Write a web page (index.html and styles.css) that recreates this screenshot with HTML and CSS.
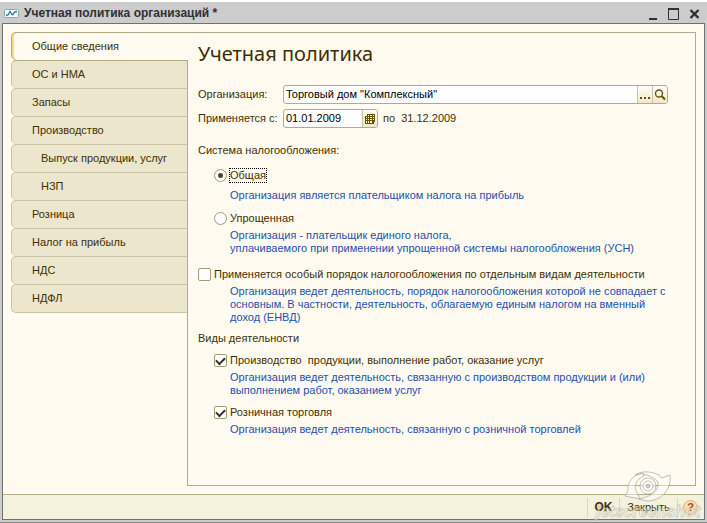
FILE: index.html
```html
<!DOCTYPE html>
<html lang="ru">
<head>
    <meta charset="UTF-8">
    <meta name="viewport" content="width=device-width, initial-scale=1.0">
    <title>Учетная политика организаций</title>
    <link rel="stylesheet" href="styles.css">
</head>
<body>
    <div class="window">
        <header class="titlebar">
            <svg class="app-icon" width="16" height="9" viewBox="0 0 16 9">
                <rect x="0.5" y="0.5" width="14" height="8" rx="1" fill="#f4fbff" stroke="#8aaabb"/>
                <path d="M2 6.5L4 6L6 2.5L8 5.5L9 5.5L10.500 3L13 2.500" fill="none" stroke="#2f6f96" stroke-width="1.300"/>
            </svg>
            <span class="title">Учетная политика организаций *</span>
            <button class="win-btn" aria-label="Свернуть">
                <svg width="12" height="12" viewBox="0 0 12 12"><path d="M2 11h8" stroke="#303030" stroke-width="2"/></svg>
            </button>
            <button class="win-btn" aria-label="Развернуть">
                <svg width="12" height="12" viewBox="0 0 12 12"><path d="M0.500 1v10.500h10V1" fill="none" stroke="#303030"/><path d="M0 1h11" stroke="#303030" stroke-width="2"/></svg>
            </button>
            <button class="win-btn" aria-label="Закрыть окно">
                <svg width="12" height="12" viewBox="0 0 12 12"><path d="M1.500 2l8 8M9.500 2l-8 8" stroke="#303030" stroke-width="2.400"/></svg>
            </button>
        </header>

        <div class="client">
            <main class="content">
                <nav class="tabs">
                    <a href="#" class="tab active">Общие сведения</a>
                    <a href="#" class="tab">ОС и НМА</a>
                    <a href="#" class="tab">Запасы</a>
                    <a href="#" class="tab">Производство</a>
                    <a href="#" class="tab sub">Выпуск продукции, услуг</a>
                    <a href="#" class="tab sub">НЗП</a>
                    <a href="#" class="tab">Розница</a>
                    <a href="#" class="tab">Налог на прибыль</a>
                    <a href="#" class="tab">НДС</a>
                    <a href="#" class="tab">НДФЛ</a>
                </nav>

                <form class="panel">
                    <h1>Учетная политика</h1>

                    <div class="row">
                        <label class="caption" for="org">Организация:</label>
                        <div class="field wide">
                            <input type="text" id="org" value='Торговый дом "Комплексный"'>
                            <button type="button" class="field-btn" aria-label="Выбрать">
                                <svg width="12" height="12" viewBox="0 0 12 12" fill="#6b4e00"><path d="M1 8h2v2H1zM5 8h2v2H5zM9 8h2v2H9z"/></svg>
                            </button>
                            <button type="button" class="field-btn" aria-label="Открыть">
                                <svg width="12" height="12" viewBox="0 0 12 12" fill="none" stroke="#6b4e00"><circle cx="5" cy="4.500" r="3.500" stroke-width="1.300"/><path d="M7.500 7l3.500 3.500" stroke-width="2"/></svg>
                            </button>
                        </div>
                    </div>
                    <div class="row">
                        <label class="caption" for="from">Применяется с:</label>
                        <div class="field date">
                            <input type="text" id="from" value="01.01.2009">
                            <button type="button" class="field-btn" aria-label="Календарь">
                                <svg width="12" height="12" viewBox="0 0 12 12"><path d="M3 1h8v8h-1v2H1V3h2z" fill="#6b5200"/><path d="M4 2h1v1H4zM6 2h2v1H6zM9 2h1v1H9zM2 4h1v1H2zM4 4h1v1H4zM6 4h2v1H6zM9 4h1v1H9zM2 6h1v1H2zM4 6h1v1H4zM6 6h2v1H6zM9 6h1v1H9zM2 8h1v2H2zM4 8h1v2H4zM6 8h2v2H6z" fill="#fbf5d8"/></svg>
                            </button>
                        </div>
                        <span class="until">по&nbsp; 31.12.2009</span>
                    </div>

                    <div class="group-title first">Система налогообложения:</div>
                    <div class="option indent">
                        <input type="radio" name="system" id="general" checked>
                        <label for="general" class="focused">Общая</label>
                    </div>
                    <p class="hint spaced">Организация является плательщиком налога на прибыль</p>
                    <div class="option indent">
                        <input type="radio" name="system" id="simple">
                        <label for="simple">Упрощенная</label>
                    </div>
                    <p class="hint">Организация - плательщик единого налога,<br>уплачиваемого при применении упрощенной системы налогообложения (УСН)</p>

                    <div class="option special">
                        <input type="checkbox" id="special">
                        <label for="special">Применяется особый порядок налогообложения по отдельным видам деятельности</label>
                    </div>
                    <p class="hint">Организация ведет деятельность, порядок налогообложения которой не совпадает с<br>основным. В частности, деятельность, облагаемую единым налогом на вменный<br>доход (ЕНВД)</p>

                    <div class="group-title">Виды деятельности</div>
                    <div class="option indent">
                        <input type="checkbox" id="production" checked>
                        <label for="production">Производство&nbsp; продукции, выполнение работ, оказание услуг</label>
                    </div>
                    <p class="hint">Организация ведет деятельность, связанную с производством продукции и (или)<br>выполнением работ, оказанием услуг</p>
                    <div class="option indent">
                        <input type="checkbox" id="retail" checked>
                        <label for="retail">Розничная торговля</label>
                    </div>
                    <p class="hint">Организация ведет деятельность, связанную с розничной торговлей</p>
                </form>
            </main>

            <footer class="actions">
                <button class="action ok">OK</button>
                <button class="action">Закрыть</button>
                <button class="action help" aria-label="Справка"><span>?</span></button>
            </footer>
        </div>

        <div class="watermark">
            <svg width="50" height="32" viewBox="0 0 50 32" fill="#fff" fill-opacity="0.5" stroke="#a8a698" stroke-opacity="0.7">
                <path d="M11 4C18-1 32 0 38 7L46 4C47 12 44 23 33 28C26 31 20 30 15 28C27 26 36 19 34 11C28 4 19 2 11 4z"/>
                <path d="M19 2C8 4 3 12 4 20L1 25L16 28L13 22C9 16 12 8 20 5z"/>
                <circle cx="24" cy="15" r="8"/>
                <circle cx="24" cy="15" r="5"/>
                <circle cx="24" cy="15" r="2" fill="#a8a698"/>
            </svg>
            <span>jetscreenshot</span>
        </div>
    </div>
</body>
</html>
```
FILE: styles.css
```css
* { box-sizing: border-box; }
body { margin: 0; background: #fff; color: #3f2f00; font: 11px/13px "Liberation Sans", Arial, sans-serif; }
button { font: inherit; color: inherit; border: 0; background: none; padding: 0; }

.window { position: relative; display: flex; flex-direction: column; min-height: 100vh; padding: 0 2px 2px; border-top: 2px solid #fff; border-bottom: 1px solid #8a8a8a; background: #ccc; }

.titlebar { display: flex; align-items: center; height: 21px; padding: 2px 4px 0 2px; color: #303030; }
.app-icon { margin-right: 4px; }
.title { flex: 1; font-size: 12px; font-weight: bold; }
.win-btn { display: flex; margin-left: 9px; }

.client { flex: 1; display: flex; flex-direction: column; border: 1px solid #707070; background: #fffbf0; }
.content { flex: 1; display: flex; padding: 8px; }

.tabs { width: 176px; }
.tab { display: block; height: 28px; padding: 7px 0 0 20px; border: 1px solid #cbc4a2; border-width: 1px 0 0 1px; border-radius: 5px 0 0 5px; background: #ece6ce; color: inherit; text-decoration: none; }
.tab.sub { padding-left: 29px; }
.tab.active { border-color: #b3ab84; background: #fffbf0; box-shadow: inset 2px 0 #f8d78c; }
.tab.active + .tab { border-top-color: #b3ab84; }
.tab:last-child { height: 29px; border-bottom-width: 1px; }

.panel { flex: 1; padding: 9px 27px 20px 11px; border: 1px solid #b3ab84; border-left: 0; background: linear-gradient(#b3ab84, #b3ab84) 0 27px / 1px 100% no-repeat; }
h1 { margin: 0 0 19px; font: 20px/24px "Noto Sans", "Open Sans", sans-serif; }

.row { display: flex; align-items: center; margin-bottom: 5px; }
.caption { width: 85px; }
.field { display: flex; height: 19px; border: 1px solid #b3ab84; border-radius: 3px; background: #fff; overflow: hidden; }
.field.wide { flex: 1; }
.field.date { width: 95px; }
.field input { flex: 1; min-width: 0; padding: 0 2px; border: 0; outline: 0; background: none; color: #000; font: inherit; }
.field-btn { display: flex; align-items: center; justify-content: center; width: 15px; border-left: 1px solid #cbc4a2; background: linear-gradient(#fffef5, #eee9cc); }
.until { margin-left: 5px; }

.group-title { margin: 8px 0; }
.group-title.first { margin: 16px 0 11px; }

.option { display: flex; align-items: center; height: 15px; }
.option.indent { padding-left: 16px; }
.option.special { margin-top: 12px; }
.option input { appearance: none; flex: none; display: grid; place-items: center; width: 13px; height: 13px; margin: 0 3px 0 0; border: 1px solid #a39b73; border-radius: 2px; background: #fff; }
.option input[type="radio"] { border-radius: 50%; }
.option input[type="radio"]:checked::before { content: ""; width: 5px; height: 5px; border-radius: 50%; background: #444; }
.option input[type="checkbox"]:checked::before { content: ""; width: 7px; height: 4px; margin-bottom: 2px; border: solid #303030; border-width: 0 0 2px 2px; transform: rotate(-45deg); }
.focused { outline: 1px dotted #000; }

.hint { margin: 3px 0 8px 32px; color: #1b50b0; white-space: nowrap; }
.hint.spaced { margin: 6px 0 9px 32px; }

.actions { display: flex; justify-content: flex-end; align-items: center; height: 25px; border-top: 1px solid #b3ab84; background: #f4f1dc; }
.action { width: 58px; height: 19px; border-left: 1px solid #dcd7b8; }
.action.ok { width: 32px; font-size: 12px; font-weight: bold; }
.action.help { width: 27px; padding-left: 5px; }
.action.help span { display: block; width: 15px; height: 15px; border: 1px solid #d8b48c; border-radius: 50%; background: #fbdcb4; color: #96501e; font: bold 11px/13px "Liberation Sans", Arial, sans-serif; }

.watermark { position: absolute; right: 3px; bottom: 1px; width: 108px; pointer-events: none; }
.watermark svg { display: block; margin-left: 28px; }
.watermark span { display: block; color: rgba(255, 255, 255, 0.5); font: italic bold 16px/18px "Liberation Sans", Arial, sans-serif; -webkit-text-stroke: 1px rgba(150, 148, 135, 0.4); }
```
